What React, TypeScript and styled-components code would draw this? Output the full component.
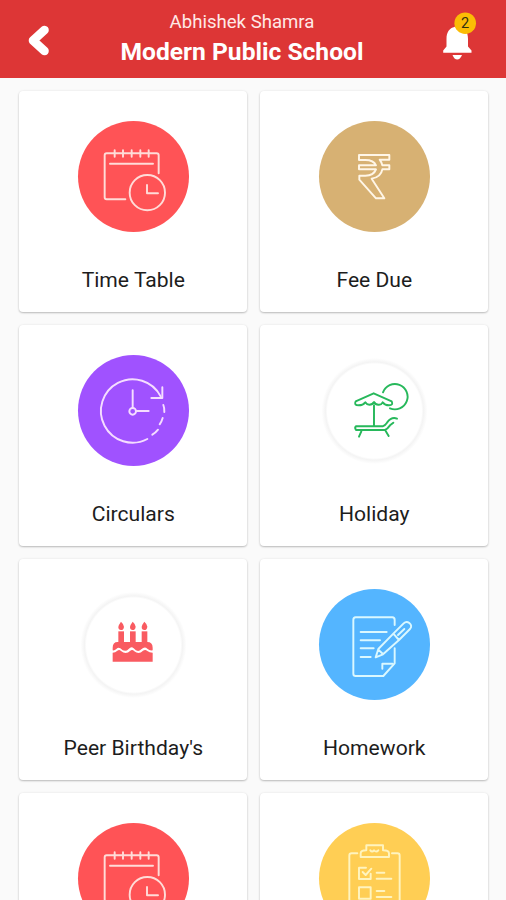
import React from "react";
import styled, { createGlobalStyle } from "styled-components";

const GlobalStyle = createGlobalStyle`
  * { box-sizing: border-box; }
  body { margin: 0; background: #fafafa; font-family: Roboto, "Liberation Sans", sans-serif; }
`;

const Screen = styled.div`
  height: 900px;
  overflow: hidden;
  background: #fafafa;
`;

const Header = styled.header`
  display: flex;
  align-items: center;
  height: 78px;
  background: #dd3636;
  color: #fff;
`;

const HeaderButton = styled.button<{ $width: number }>`
  display: flex;
  flex: none;
  width: ${(p) => p.$width}px;
  height: 100%;
  padding: 0;
  border: 0;
  background: none;
`;

const Titles = styled.div`
  flex: 1;
  height: 100%;
  padding-top: 9px;
  text-align: center;
  white-space: nowrap;
`;

const UserName = styled.div`
  font-size: 18.6px;
  line-height: 26px;
  color: #ffe9e6;
`;

const SchoolName = styled.h1`
  margin: 1px 0 0;
  font-size: 24.6px;
  line-height: 31px;
  font-weight: 700;
`;

const Grid = styled.main`
  display: grid;
  grid-template-columns: 228px 228px;
  grid-auto-rows: 221px;
  gap: 13px;
  padding: 13px 0 0 19.3px;
`;

const Card = styled.section`
  display: flex;
  flex-direction: column;
  align-items: center;
  padding-top: 30px;
  border-radius: 4px;
  background: #fff;
  box-shadow: 0 1px 2px rgba(0, 0, 0, 0.24), 0 0 3px rgba(0, 0, 0, 0.06);
`;

const Disc = styled.div<{ $color?: string }>`
  display: flex;
  width: 111px;
  height: 111px;
  border-radius: 50%;
  background: ${(p) => p.$color ?? "radial-gradient(circle at 50% 56px, #fff 47px, #f4f4f4 49px, #f8f8f8 50.5px, #fff 53px)"};
`;

const Glyph = styled.svg<{ $stroke: string }>`
  width: 111px;
  height: 111px;
  fill: none;
  stroke: ${(p) => p.$stroke};
  stroke-width: 5.8;
  stroke-linecap: round;
  stroke-linejoin: round;
`;

const Label = styled.div`
  margin-top: 34px;
  font-size: 21.1px;
  line-height: 28px;
  color: #1d1d1d;
  white-space: nowrap;
`;

const TimeTableIcon = () => (
  <Glyph $stroke="#ffdcd8" viewBox="24 33 333 333">
    <path d="M166 268H110Q104 268 104 262V136Q104 130 110 130H260Q266 130 266 136V190" />
    <path d="M134 121V140M159 121V140M185 121V140M211 121V140M236 121V140M120 161H249" />
    <circle cx="232" cy="248" r="53" />
    <path d="M231 225V250H264" />
  </Glyph>
);

const RupeeIcon = () => (
  <Glyph $stroke="#fff6e7" viewBox="26 33 333 333">
    <path d="M146 135H237V149H208Q214 157 216 166H237V178H216Q212 201 184 206L222 265H197L147 209V197H165Q190 197 197 178H146V166H197Q190 150 165 150H146Z" />
  </Glyph>
);

const CircularsIcon = () => (
  <Glyph $stroke="#f5ddff" viewBox="24 30 333 333">
    <path d="M232 282A95 95 0 1 1 272 154" />
    <path d="M277 127V159H244M280 180Q284 190 283 201M278 219Q275 230 269 238M264 254Q257 263 247 269" />
    <path d="M188 136V188M198 198H236" />
    <circle cx="188" cy="199" r="10" />
  </Glyph>
);

const HolidayIcon = () => (
  <Glyph $stroke="#27b85b" viewBox="26 29 333 333">
    <path d="M218 141A38 38 0 1 1 239 189" />
    <path d="M136 168L190 144L244 168Q250 180 236 180Q224 180 217 171Q213 179 204 178Q195 178 191 170Q187 178 177 178Q169 178 165 171Q158 180 145 180Q130 180 136 168Z" />
    <path d="M191 180V239M137 243H217Q224 241 230 232Q244 213 260 220M137 243Q132 247 137 254H224Q231 251 239 240L249 232M153 258L146 274M226 257L235 272" />
  </Glyph>
);

const BirthdayIcon = () => (
  <Glyph $stroke="none" viewBox="24 26 333 333">
    <g fill="#f95b61">
      {[153, 188, 223].map((x) => (
        <g key={x}>
          <path d={`M${x} 124Q${x + 9} 132 ${x + 9} 139Q${x + 8} 149 ${x} 149Q${x - 8} 149 ${x - 8} 140Q${x - 7} 133 ${x} 124Z`} />
          <path d={`M${x - 8} 153H${x + 9}V188H${x - 8}Z`} />
        </g>
      ))}
      <path d="M128 202Q128 185 143 185H232Q248 185 248 202V210Q239 212 232 205Q224 197 214 207Q203 218 191 204Q184 197 176 206Q165 218 151 204Q145 199 139 206Q134 211 128 210Z" />
      <path d="M128 217Q136 217 142 211Q148 206 153 212Q168 224 181 211Q187 206 193 213Q207 224 219 211Q226 206 232 212Q238 217 248 217V244H128Z" />
    </g>
  </Glyph>
);

const HomeworkIcon = () => (
  <Glyph $stroke="#daf8ff" viewBox="26 27 333 333">
    <path d="M253 135V120Q253 112 246 112H136Q129 112 129 120V281Q129 288 136 288H219L253 250V205" />
    <path d="M216 266V251H247M151 156H229M151 181H209M151 205H190M151 231H181" />
    <path d="M196 232L204 207L249 161L266 180L218 223ZM249 161L280 130Q288 122 297 129Q307 137 299 147L266 180M204 209L218 222M263 165L282 147" />
  </Glyph>
);

const ChecklistIcon = () => (
  <Glyph $stroke="#fff4bf" viewBox="26 129 333 333">
    <path d="M141 220H124Q117 220 117 227V400Q117 407 124 407H261Q268 407 268 400V227Q268 220 261 220H245" />
    <path d="M151 231V220Q151 211 168 211V196H218V211Q236 211 236 220V231ZM180 211Q185 218 191 211Q198 218 204 211" />
    <path d="M167 263H146V297H181V281M157 276L166 285L183 266M199 278H222M199 296H243M146 322H181V356H146ZM199 333H222M199 351H243" />
  </Glyph>
);

const BackIcon = () => (
  <svg width="76" height="77" viewBox="0 0 76 77" fill="none" stroke="#fff" strokeWidth="8.6" strokeLinecap="round" strokeLinejoin="round">
    <path d="M44.5 30L33 40.5L44.5 51" />
  </svg>
);

const BellIcon = () => (
  <svg width="98" height="77" viewBox="408 0 98 77">
    <g fill="#fff">
      <path d="M443.2 52.8V50.5L446.5 46.5V39C446.5 32 449.5 28 454.5 27Q457 23 459.7 27C465 28 468 32 468 39V46.5L471.5 50.5V52.8Z" />
      <path d="M452.5 55H462Q460 59.5 457.3 59.5Q454.3 59.5 452.5 55Z" />
    </g>
    <circle cx="465.2" cy="23.2" r="10.8" fill="#fbbc05" />
    <text x="465" y="28.3" textAnchor="middle" fontFamily="Roboto, sans-serif" fontSize="14.5" fill="#303010">2</text>
  </svg>
);

const tiles = [
  { label: "Time Table", color: "#ff5356", Icon: TimeTableIcon },
  { label: "Fee Due", color: "#d7b173", Icon: RupeeIcon },
  { label: "Circulars", color: "#a052ff", Icon: CircularsIcon },
  { label: "Holiday", Icon: HolidayIcon },
  { label: "Peer Birthday's", Icon: BirthdayIcon },
  { label: "Homework", color: "#54b5ff", Icon: HomeworkIcon },
  { label: "", color: "#ff5356", Icon: TimeTableIcon },
  { label: "", color: "#ffce54", Icon: ChecklistIcon },
];

export default function App() {
  return (
    <Screen>
      <GlobalStyle />
      <Header>
        <HeaderButton $width={76} aria-label="Back"><BackIcon /></HeaderButton>
        <Titles>
          <UserName>Abhishek Shamra</UserName>
          <SchoolName>Modern Public School</SchoolName>
        </Titles>
        <HeaderButton $width={98} aria-label="Notifications"><BellIcon /></HeaderButton>
      </Header>
      <Grid>
        {tiles.map(({ label, color, Icon }, i) => (
          <Card key={i}>
            <Disc $color={color}><Icon /></Disc>
            <Label>{label}</Label>
          </Card>
        ))}
      </Grid>
    </Screen>
  );
}
